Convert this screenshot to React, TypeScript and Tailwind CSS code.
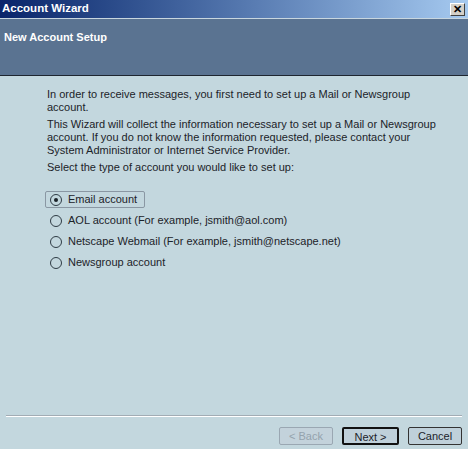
import React from "react"

const options = [
  "Email account",
  "AOL account (For example, jsmith@aol.com)",
  "Netscape Webmail (For example, jsmith@netscape.net)",
  "Newsgroup account",
]

function Radio({ checked }: { checked: boolean }) {
  return (
    <span className="relative w-[12px] h-[12px] rounded-full border-[1.5px] border-[#2f3c45] bg-[#c3d7de] flex items-center justify-center shrink-0">
      {checked && <span className="w-[4px] h-[4px] rounded-full bg-[#1a2228]" />}
    </span>
  )
}

export default function App() {
  return (
    <div
      className="w-[468px] h-[449px] bg-[#c3d7de] flex flex-col text-[11px] text-[#1c2329] overflow-hidden"
      style={{ fontFamily: '"Liberation Sans", Arial, sans-serif' }}
    >
      {/* title bar */}
      <div className="h-[18px] flex items-center justify-between pl-[2px] pr-[3px] bg-gradient-to-r from-[#0a246a] to-[#a6caf0]">
        <span className="text-white font-bold text-[11.5px]">Account Wizard</span>
        <span className="w-[15px] h-[13px] bg-[#d4d0c8] border border-t-white border-l-white border-r-[#404040] border-b-[#404040] flex items-center justify-center text-[11px] font-bold leading-none text-black">
          ✕
        </span>
      </div>
      <div className="h-[1px] bg-[#c8d6df]" />

      {/* header */}
      <div className="h-[56px] bg-[#5a7391] px-[4px] pt-[10px]">
        <span className="text-white font-bold text-[11px]">New Account Setup</span>
      </div>
      <div className="h-[1px] bg-[#1e2630]" />

      {/* body */}
      <div className="flex-1 flex flex-col pl-[47px] pr-[20px] pt-[12px] leading-[13px]">
        <p>In order to receive messages, you first need to set up a Mail or Newsgroup account.</p>
        <p className="mt-[4px]">
          This Wizard will collect the information necessary to set up a Mail or Newsgroup account. If you do not know the information requested, please contact your System Administrator or Internet Service Provider.
        </p>
        <p className="mt-[4px]">Select the type of account you would like to set up:</p>

        <div className="mt-[17px] flex flex-col gap-[4px] -ml-[2px]">
          {options.map((o, i) => (
            <div key={o} className="flex">
              <div
                className={
                  "h-[17px] flex items-center gap-[6px] pl-[4px] pr-[7px] rounded-[2px] border " +
                  (i === 0 ? "border-[#8a97a3]" : "border-transparent")
                }
              >
                <Radio checked={i === 0} />
                <span>{o}</span>
              </div>
            </div>
          ))}
        </div>
      </div>

      {/* footer */}
      <div className="mx-[6px] h-[1px] bg-[#a2acb4]" />
      <div className="mx-[6px] h-[1px] bg-white" />
      <div className="h-[32px] flex items-start justify-end gap-[9px] pr-[6px] pt-[10px]">
        <button className="w-[54px] h-[18px] rounded-[2px] border border-[#9aa7b2] bg-[#c3d2db] text-[#94a2ad] text-[11px]">
          &lt; Back
        </button>
        <button className="w-[57px] h-[18px] rounded-[2px] border-2 border-[#111] bg-[#bfd0da] text-[11px]">
          Next &gt;
        </button>
        <button className="w-[54px] h-[18px] rounded-[2px] border border-[#333] bg-[#bfd0da] text-[11px]">
          Cancel
        </button>
      </div>
    </div>
  )
}
